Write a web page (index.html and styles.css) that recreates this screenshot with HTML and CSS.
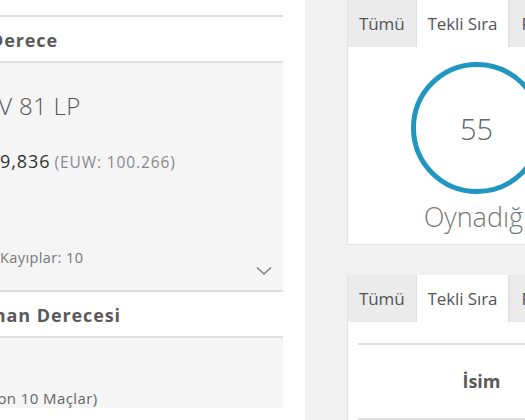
FILE: index.html
```html
<!DOCTYPE html>
<html lang="tr">
<head>
<meta charset="utf-8">
<title>Profil</title>
<link rel="stylesheet" href="styles.css">
</head>
<body>
<div class="page">
  <div class="left">
    <section class="panel">
      <h2 class="panel-head">Derece</h2>
      <div class="panel-body">
        <div class="tier">IV 81 LP</div>
        <div class="rank"><span class="rank-num">9,836</span> <span class="rank-region">(EUW: 100.266)</span></div>
        <div class="record">Kayıplar: 10</div>
        <div class="toggle">
          <svg class="chevron" width="16" height="10" viewBox="0 0 16 10"><path d="M1 1.5 L8 8 L15 1.5" fill="none" stroke="#808080" stroke-width="1.6"/></svg>
        </div>
      </div>
    </section>
    <section class="panel">
      <h2 class="panel-head head-2">Oynanan Derecesi</h2>
      <div class="panel-body">
        <div class="recent">(Son 10 Maçlar)</div>
      </div>
    </section>
  </div>
  <div class="right">
    <div class="card">
      <div class="tabs">
        <div class="tab">Tümü</div>
        <div class="tab active">Tekli Sıra</div>
        <div class="tab">Flex Sıra</div>
      </div>
      <div class="card-body">
        <div class="ring"><span class="ring-num">55</span></div>
        <div class="ring-label">Oynadığı</div>
      </div>
    </div>
    <div class="card">
      <div class="tabs">
        <div class="tab">Tümü</div>
        <div class="tab active">Tekli Sıra</div>
        <div class="tab">Flex Sıra</div>
      </div>
      <div class="card-body table-body">
        <div class="table-head">İsim</div>
      </div>
    </div>
  </div>
</div>
</body>
</html>
```

FILE: styles.css
```css
* { box-sizing: border-box; }
html, body { margin: 0; padding: 0; background: #fff; overflow: hidden; }
body { font-family: "Open Sans", "Noto Sans", sans-serif; color: #555; }
.page { display: flex; align-items: flex-start; height: 420px; }

.left { margin-left: -20px; width: 303px; flex: none; padding-top: 15px; }
.panel { border-top: 2px solid #dedede; }
.panel-head {
  margin: 0; height: 46px; line-height: 46px; padding-left: 10px;
  font-size: 18px; font-weight: 700; color: #5a5a5a; letter-spacing: 0.9px;
  background: #fff; border-bottom: 2px solid #dedede; white-space: nowrap;
}
.head-2 { text-indent: -47px; }
.panel-body { background: #f5f5f5; padding-left: 20px; }
.panel:first-child .panel-body { height: 227px; padding-top: 28px; }
.tier { font-size: 24px; font-weight: 300; color: #555; line-height: 30px; margin-left: -8px; white-space: nowrap; letter-spacing: 0.3px; }
.rank { margin-top: 30px; line-height: 20px; white-space: nowrap; }
.rank-num { font-size: 18px; color: #333; letter-spacing: 0.9px; }
.rank-region { font-size: 15.5px; color: #8a8a8a; letter-spacing: 0.9px; }
.record { margin-top: 76px; font-size: 14.5px; line-height: 20px; color: #777; letter-spacing: 0.4px; }
.toggle { display: flex; justify-content: flex-end; padding-right: 11px; margin-top: -2px; }
.chevron { display: block; }
.recent { padding-top: 50px; font-size: 15px; line-height: 20px; color: #666; margin-left: -16px; white-space: nowrap; letter-spacing: 0.4px; }

.right { flex: none; width: 320px; margin-left: 22px; background: #f1f1f1; height: 420px; padding-left: 42px; }
.card { width: 258px; margin-bottom: 30px; }
.tabs { display: flex; height: 47px; }
.tab {
  padding: 0 11px; line-height: 47px; font-size: 17px; color: #555; letter-spacing: -0.1px;
  background: #ebebeb; border-left: 1px solid #e0e0e0; white-space: nowrap;
}
.tab.active { background: #fff; border-right: 1px solid #e0e0e0; }
.card-body { background: #fff; border-left: 1px solid #e2e2e2; border-bottom: 1px solid #e2e2e2; height: 198px; padding-top: 15px; display: flex; flex-direction: column; align-items: center; }
.ring {
  width: 132px; height: 132px; border-radius: 50%; border: 5px solid #2196c0;
  display: flex; align-items: center; justify-content: center;
}
.ring-num { font-family: "Open Sans Light", "Lato", "Open Sans", sans-serif; font-size: 29px; font-weight: 300; color: #666; }
.ring-label { font-family: "Open Sans Light", "Lato", "Open Sans", sans-serif; margin-top: 6px; font-size: 27px; font-weight: 300; color: #777; line-height: 34px; }

.table-body { height: 120px; padding: 21px 10px 0; align-items: stretch; }
.table-head {
  border-top: 2px solid #dedede; border-bottom: 2px solid #dedede;
  height: 77px; line-height: 73px; text-align: center; padding-left: 10px;
  font-size: 18px; font-weight: 700; color: #5a5a5a;
}
```
